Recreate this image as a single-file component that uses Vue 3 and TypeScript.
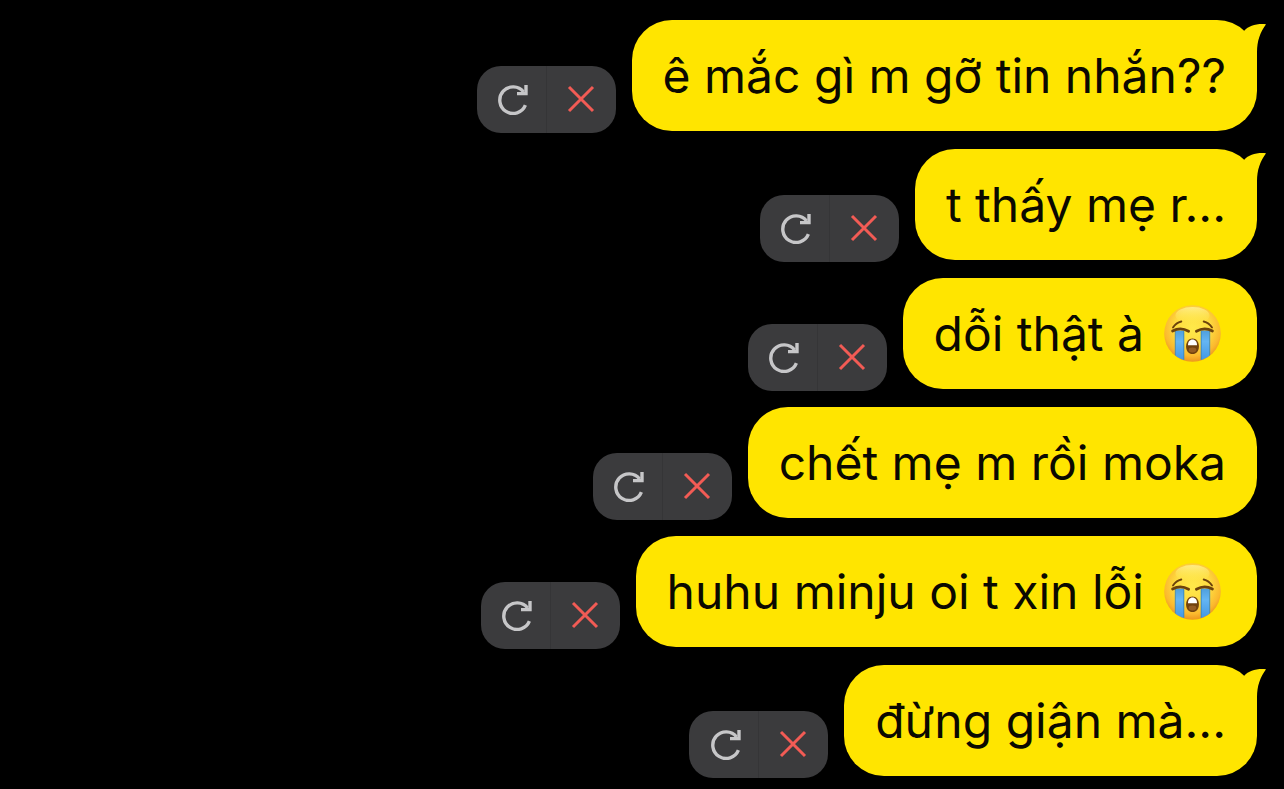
<script setup lang="ts">
interface Message {
  id: number
  text: string
  tail?: boolean
  crying?: boolean
}

const messages: Message[] = [
  { id: 1, text: 'ê mắc gì m gỡ tin nhắn??', tail: true },
  { id: 2, text: 't thấy mẹ r...', tail: true },
  { id: 3, text: 'dỗi thật à', crying: true },
  { id: 4, text: 'chết mẹ m rồi moka' },
  { id: 5, text: 'huhu minju oi t xin lỗi', crying: true },
  { id: 6, text: 'đừng giận mà...', tail: true },
]
</script>

<template>
  <main class="chat">
    <svg class="defs" aria-hidden="true">
      <defs>
        <radialGradient id="face" cx="0.5" cy="0.4" r="0.62">
          <stop offset="0" stop-color="#ffe94a" />
          <stop offset="0.5" stop-color="#fedb40" />
          <stop offset="0.8" stop-color="#fbb92e" />
          <stop offset="1" stop-color="#ea8f1b" />
        </radialGradient>
        <linearGradient id="shine" x1="0" y1="0" x2="0" y2="1">
          <stop offset="0" stop-color="#fff9b0" stop-opacity="0.65" />
          <stop offset="1" stop-color="#fff04a" stop-opacity="0" />
        </linearGradient>
        <linearGradient id="tear" x1="0" y1="0" x2="0" y2="1">
          <stop offset="0" stop-color="#4f9fdc" />
          <stop offset="0.35" stop-color="#64b5f3" />
          <stop offset="1" stop-color="#3f94e2" />
        </linearGradient>
        <clipPath id="round"><circle cx="28.5" cy="28.5" r="28" /></clipPath>
      </defs>
    </svg>

    <div v-for="m in messages" :key="m.id" class="row">
      <div class="actions">
        <button class="retry" type="button" aria-label="Gửi lại">
          <svg width="32" height="32" viewBox="0 0 32 32">
            <path d="M28.4 22.2A13.3 13.3 0 1 1 26.6 9" />
            <path d="M29 2V10.6H20" />
          </svg>
        </button>
        <button class="remove" type="button" aria-label="Xóa">
          <svg width="28" height="28" viewBox="0 0 28 28">
            <path d="M2 2L26 26M26 2L2 26" />
          </svg>
        </button>
      </div>
      <div class="bubble">
        <span>{{ m.text }}</span>
        <svg v-if="m.crying" class="emoji" viewBox="0 0 57 57" role="img" aria-label="😭">
          <circle cx="28.5" cy="28.5" r="28.3" fill="url(#face)" />
          <ellipse cx="28.5" cy="10.5" rx="17" ry="8.5" fill="url(#shine)" />
          <g clip-path="url(#round)">
            <path d="M11.5 25.5H20V57H11.5Z" fill="url(#tear)" />
            <path d="M37 25.5H45.5V57H37Z" fill="url(#tear)" />
            <path d="M11.3 26V57M19.8 26V57M37.2 26V57M45.7 26V57" stroke="#3887bd" stroke-width="0.9" />
          </g>
          <g fill="none" stroke="#6d420c" stroke-linecap="round">
            <path d="M9 22.5Q12 17.8 17.3 16.5M48 22.5Q45 17.8 39.7 16.5" stroke-width="1.9" />
            <path d="M8.6 26Q16.5 21.6 24.6 26.2M48.4 26Q40.5 21.6 32.4 26.2" stroke-width="2.8" />
          </g>
          <path d="M28.5 33.4C32.5 33.4 34.9 36.9 34.9 41.2C34.9 46 32.4 49 28.5 49C24.6 49 22.1 46 22.1 41.2C22.1 36.9 24.6 33.4 28.5 33.4Z" fill="#71420d" />
          <path d="M24 40.2C24 36.8 25.8 34.6 28.5 34.6S33 36.8 33 40.2Z" fill="#fff" />
          <ellipse cx="28.5" cy="45" rx="3.8" ry="2.4" fill="#955c22" />
        </svg>
        <svg v-if="m.tail" class="tail" viewBox="0 0 28 36" aria-hidden="true">
          <path d="M6 7C11 1.5 18 -0.5 28 0.2C22 8.5 19 17 19 28V36H0V7Z" />
        </svg>
      </div>
    </div>
  </main>
</template>

<style scoped>
.chat {
  display: flex;
  flex-direction: column;
  gap: 18px;
  min-height: 100vh;
  box-sizing: border-box;
  padding: 20px 27px 13px;
  background: #000;
  font-family: Inter, "Noto Sans", sans-serif;
}

.defs {
  position: absolute;
  width: 0;
  height: 0;
}

.row {
  display: flex;
  justify-content: flex-end;
  align-items: flex-end;
  gap: 16px;
}

.actions {
  display: flex;
  flex: none;
  height: 67px;
  margin-bottom: -2px;
  overflow: hidden;
  border-radius: 24px;
  background: #3b3b3d;
}

button {
  display: flex;
  align-items: center;
  justify-content: center;
  box-sizing: border-box;
  width: 69px;
  padding: 0 1px 1px 0;
  border: 0;
  background: none;
  cursor: pointer;
}

.retry {
  width: 70px;
  padding: 0 0 2px 4px;
  border-right: 1px solid #353537;
}

button path {
  fill: none;
  stroke-width: 3;
}

.retry path {
  stroke: #c6c6c8;
  stroke-width: 3.4;
}

.remove path {
  stroke: #f25b55;
}

.bubble {
  position: relative;
  display: flex;
  align-items: center;
  box-sizing: border-box;
  min-height: 111px;
  padding: 0 31px;
  border-radius: 40px;
  background: #ffe500;
  color: #0b0900;
  font-size: 48px;
  line-height: 60px;
}

.emoji {
  flex: none;
  width: 57px;
  height: 57px;
  margin: 0 5px 0 20px;
}

.tail {
  position: absolute;
  top: 4px;
  right: -9px;
  width: 28px;
  height: 36px;
  fill: #ffe500;
}
</style>

<style>
body {
  margin: 0;
  background: #000;
}
</style>
